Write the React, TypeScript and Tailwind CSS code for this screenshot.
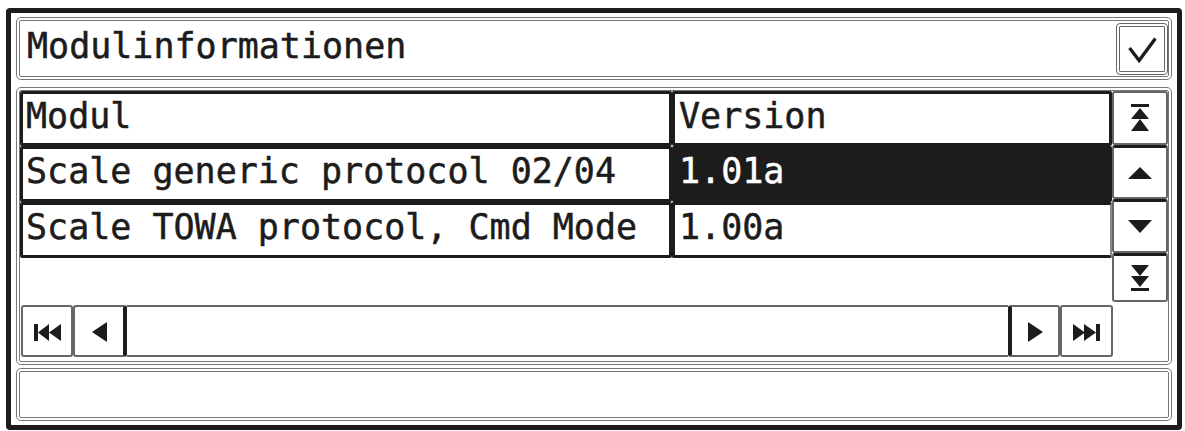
import React from "react";

const ink = "#1c1c1c";

const CheckIcon = () => (
  <svg width="46" height="46" viewBox="0 0 46 46">
    <polyline points="10,22 20,35 37,12" fill="none" stroke={ink} strokeWidth="3.5" />
  </svg>
);

const TopIcon = () => (
  <svg width="20" height="29" viewBox="0 0 20 29">
    <rect x="1" y="0" width="18" height="3" fill={ink} />
    <polygon points="10,4 19,15 1,15" fill={ink} />
    <polygon points="10,15 19,27 1,27" fill={ink} />
  </svg>
);

const BottomIcon = () => (
  <svg width="20" height="27" viewBox="0 0 20 27">
    <polygon points="1,0 19,0 10,11" fill={ink} />
    <polygon points="1,11 19,11 10,22" fill={ink} />
    <rect x="1" y="23" width="18" height="3" fill={ink} />
  </svg>
);

const UpIcon = () => (
  <svg width="24" height="12" viewBox="0 0 24 12">
    <polygon points="12,0 24,12 0,12" fill={ink} />
  </svg>
);

const DownIcon = () => (
  <svg width="24" height="13" viewBox="0 0 24 13">
    <polygon points="0,0 24,0 12,13" fill={ink} />
  </svg>
);

const FirstIcon = () => (
  <svg width="27" height="17" viewBox="0 0 27 17">
    <rect x="0" y="0" width="4" height="17" fill={ink} />
    <polygon points="4,8.5 15,0 15,17" fill={ink} />
    <polygon points="15,8.5 27,0 27,17" fill={ink} />
  </svg>
);

const LastIcon = () => (
  <svg width="27" height="17" viewBox="0 0 27 17">
    <polygon points="0,0 12,8.5 0,17" fill={ink} />
    <polygon points="11,0 23,8.5 11,17" fill={ink} />
    <rect x="23" y="0" width="4" height="17" fill={ink} />
  </svg>
);

const LeftIcon = () => (
  <svg width="15" height="20" viewBox="0 0 15 20">
    <polygon points="0,10 15,0 15,20" fill={ink} />
  </svg>
);

const RightIcon = () => (
  <svg width="15" height="20" viewBox="0 0 15 20">
    <polygon points="0,0 15,10 0,20" fill={ink} />
  </svg>
);

const rows = [
  { name: "Scale generic protocol 02/04", version: "1.01a", selected: true },
  { name: "Scale TOWA protocol, Cmd Mode", version: "1.00a", selected: false },
];

export default function App() {
  return (
    <div className="w-[1185px] h-[431px] bg-white pt-[8px] pl-[6px] font-['DejaVu_Sans_Mono',monospace] text-[35px] leading-none text-[#1c1c1c] [-webkit-text-stroke-width:0.5px]">
      <div className="w-[1176px] h-[422px] border-[5px] border-[#1c1c1c] rounded-[4px] p-[4px] px-[5px] flex flex-col">
        {/* title bar */}
        <div className="h-[63px] border-[4px] border-double border-[#777] rounded-[5px] flex items-center justify-between">
          <span className="pl-[7px] pb-[5px]">Modulinformationen</span>
          <div className="w-[52px] h-[52px] border-[4px] border-double border-[#666] rounded-[4px] flex items-center justify-center">
            <CheckIcon />
          </div>
        </div>

        {/* table */}
        <div className="mt-[7px] h-[278px] border-[4px] border-double border-[#777] rounded-[5px] flex flex-col">
          <div className="flex h-[211px]">
            <div className="w-[1092px] flex flex-col">
              <div className="flex h-[55px]">
                <div className="w-[652px] border-[3px] border-[#1c1c1c] rounded-[2px] flex items-center pl-[3px] pb-[5px]">
                  Modul
                </div>
                <div className="w-[440px] border-[3px] border-[#1c1c1c] rounded-[2px] flex items-center pl-[4px] pb-[5px]">
                  Version
                </div>
              </div>
              {rows.map((r) => (
                <div key={r.name} className="flex h-[56px]">
                  <div className="w-[652px] border-[3px] border-[#1c1c1c] rounded-[2px] flex items-center pl-[3px] pb-[5px] whitespace-nowrap">
                    {r.name}
                  </div>
                  <div
                    className={
                      r.selected
                        ? "w-[440px] border-[3px] border-[#1c1c1c] rounded-[2px] bg-[#1c1c1c] text-white flex items-center pl-[4px] pb-[5px]"
                        : "w-[440px] border-[3px] border-[#1c1c1c] border-r-[2px] border-r-[#888] rounded-[2px] flex items-center pl-[4px] pb-[5px]"
                    }
                  >
                    {r.version}
                  </div>
                </div>
              ))}
            </div>

            {/* vertical scroll */}
            <div className="w-[56px] flex flex-col">
              <div className="h-[54px] border-2 border-[#666] rounded-[3px] flex items-center justify-center">
                <TopIcon />
              </div>
              <div className="h-[54px] border-2 border-[#666] border-t-[3px] border-t-[#1c1c1c] rounded-[3px] flex items-center justify-center">
                <UpIcon />
              </div>
              <div className="h-[54px] border-2 border-[#666] border-t-[3px] border-t-[#1c1c1c] rounded-[3px] flex items-center justify-center">
                <DownIcon />
              </div>
              <div className="h-[49px] border-2 border-[#666] border-t-[3px] border-t-[#1c1c1c] rounded-[3px] flex items-center justify-center">
                <BottomIcon />
              </div>
            </div>
          </div>

          {/* horizontal scroll */}
          <div className="mt-[3px] h-[52px] flex pl-[1px]">
            <div className="w-[52px] border-2 border-[#666] rounded-[3px] flex items-center justify-center pt-[2px]">
              <FirstIcon />
            </div>
            <div className="w-[54px] border-2 border-[#666] border-r-[4px] border-r-[#1c1c1c] rounded-[3px] flex items-center justify-center pt-[2px]">
              <LeftIcon />
            </div>
            <div className="w-[881px] border-t-2 border-b-2 border-[#666]" />
            <div className="w-[52px] border-2 border-[#666] border-l-[4px] border-l-[#1c1c1c] rounded-[3px] flex items-center justify-center pt-[2px]">
              <RightIcon />
            </div>
            <div className="w-[53px] border-2 border-[#666] rounded-[3px] flex items-center justify-center pt-[2px]">
              <LastIcon />
            </div>
          </div>
        </div>

        {/* status line */}
        <div className="mt-[3px] flex-1 border-[4px] border-double border-[#777] rounded-[5px]" />
      </div>
    </div>
  );
}
